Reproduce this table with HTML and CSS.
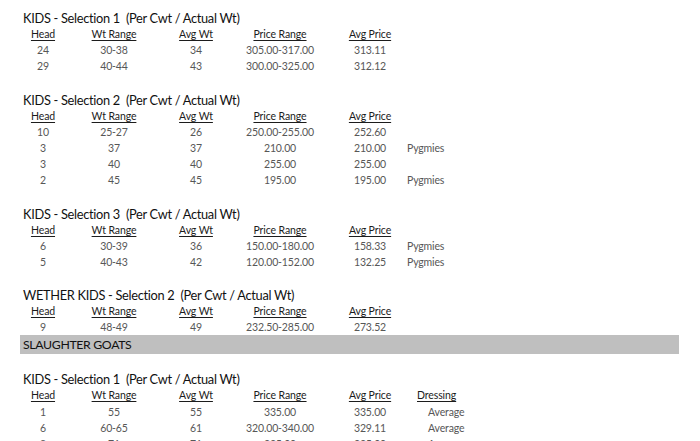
FILE: index.html
```html
<!DOCTYPE html>
<html>
<head>
<meta charset="utf-8">
<link rel="stylesheet" href="styles.css">
</head>
<body>
<div class="page">
  <section class="sec">
    <div class="title">KIDS - Selection 1&nbsp; (Per Cwt / Actual Wt)</div>
    <div class="row head"><span>Head</span><span>Wt Range</span><span>Avg Wt</span><span>Price Range</span><span>Avg Price</span></div>
    <div class="row"><span>24</span><span>30-38</span><span>34</span><span>305.00-317.00</span><span>313.11</span></div>
    <div class="row"><span>29</span><span>40-44</span><span>43</span><span>300.00-325.00</span><span>312.12</span></div>
  </section>
  <section class="sec">
    <div class="title">KIDS - Selection 2&nbsp; (Per Cwt / Actual Wt)</div>
    <div class="row head"><span>Head</span><span>Wt Range</span><span>Avg Wt</span><span>Price Range</span><span>Avg Price</span></div>
    <div class="row"><span>10</span><span>25-27</span><span>26</span><span>250.00-255.00</span><span>252.60</span></div>
    <div class="row"><span>3</span><span>37</span><span>37</span><span>210.00</span><span>210.00</span><span class="note">Pygmies</span></div>
    <div class="row"><span>3</span><span>40</span><span>40</span><span>255.00</span><span>255.00</span></div>
    <div class="row"><span>2</span><span>45</span><span>45</span><span>195.00</span><span>195.00</span><span class="note">Pygmies</span></div>
  </section>
  <section class="sec">
    <div class="title">KIDS - Selection 3&nbsp; (Per Cwt / Actual Wt)</div>
    <div class="row head"><span>Head</span><span>Wt Range</span><span>Avg Wt</span><span>Price Range</span><span>Avg Price</span></div>
    <div class="row"><span>6</span><span>30-39</span><span>36</span><span>150.00-180.00</span><span>158.33</span><span class="note">Pygmies</span></div>
    <div class="row"><span>5</span><span>40-43</span><span>42</span><span>120.00-152.00</span><span>132.25</span><span class="note">Pygmies</span></div>
  </section>
  <section class="sec">
    <div class="title">WETHER KIDS - Selection 2&nbsp; (Per Cwt / Actual Wt)</div>
    <div class="row head"><span>Head</span><span>Wt Range</span><span>Avg Wt</span><span>Price Range</span><span>Avg Price</span></div>
    <div class="row"><span>9</span><span>48-49</span><span>49</span><span>232.50-285.00</span><span>273.52</span></div>
  </section>
  <div class="bar">SLAUGHTER GOATS</div>
  <section class="sec">
    <div class="title">KIDS - Selection 1&nbsp; (Per Cwt / Actual Wt)</div>
    <div class="row head"><span>Head</span><span>Wt Range</span><span>Avg Wt</span><span>Price Range</span><span>Avg Price</span><span class="dress-h">Dressing</span></div>
    <div class="row"><span>1</span><span>55</span><span>55</span><span>335.00</span><span>335.00</span><span class="dress">Average</span></div>
    <div class="row"><span>6</span><span>60-65</span><span>61</span><span>320.00-340.00</span><span>329.11</span><span class="dress">Average</span></div>
    <div class="row"><span>8</span><span>71</span><span>71</span><span>335.00</span><span>335.00</span><span class="dress">Average</span></div>
  </section>
</div>
</body>
</html>
```

FILE: styles.css
```css
html, body {
  margin: 0;
  padding: 0;
  background: #ffffff;
}
body {
  font-family: Lato, "Open Sans", sans-serif;
  color: #1c1c1c;
  overflow: hidden;
}
.page {
  padding: 10px 21px 0 23px;
}
.sec + .sec {
  margin-top: 17px;
}
.title {
  height: 16px;
  line-height: 17px;
  font-size: 12.8px;
  letter-spacing: -0.3px;
  white-space: pre;
  color: #111;
}
.row {
  display: grid;
  grid-template-columns: 40px 102px 62px 106px 74px auto;
  height: 16.2px;
  line-height: 16.5px;
  font-size: 10.5px;
  font-weight: 400;
  letter-spacing: -0.15px;
  color: #575757;
}
.row span {
  text-align: center;
}
.row span.note,
.row span.dress,
.row span.dress-h {
  text-align: left;
}
.row span.dress-h {
  padding-left: 10px;
}
.row span.dress {
  padding-left: 21px;
}
.row.head {
  color: #1c1c1c;
  letter-spacing: -0.1px;
}
.row.head span {
  text-decoration: underline;
  text-underline-offset: 1.5px;
}
.bar {
  margin: 0 0 17px -3px;
  height: 19px;
  line-height: 19px;
  padding-left: 3px;
  background: #bfbfbf;
  font-size: 12.3px;
  letter-spacing: -0.35px;
  color: #111;
}
```
